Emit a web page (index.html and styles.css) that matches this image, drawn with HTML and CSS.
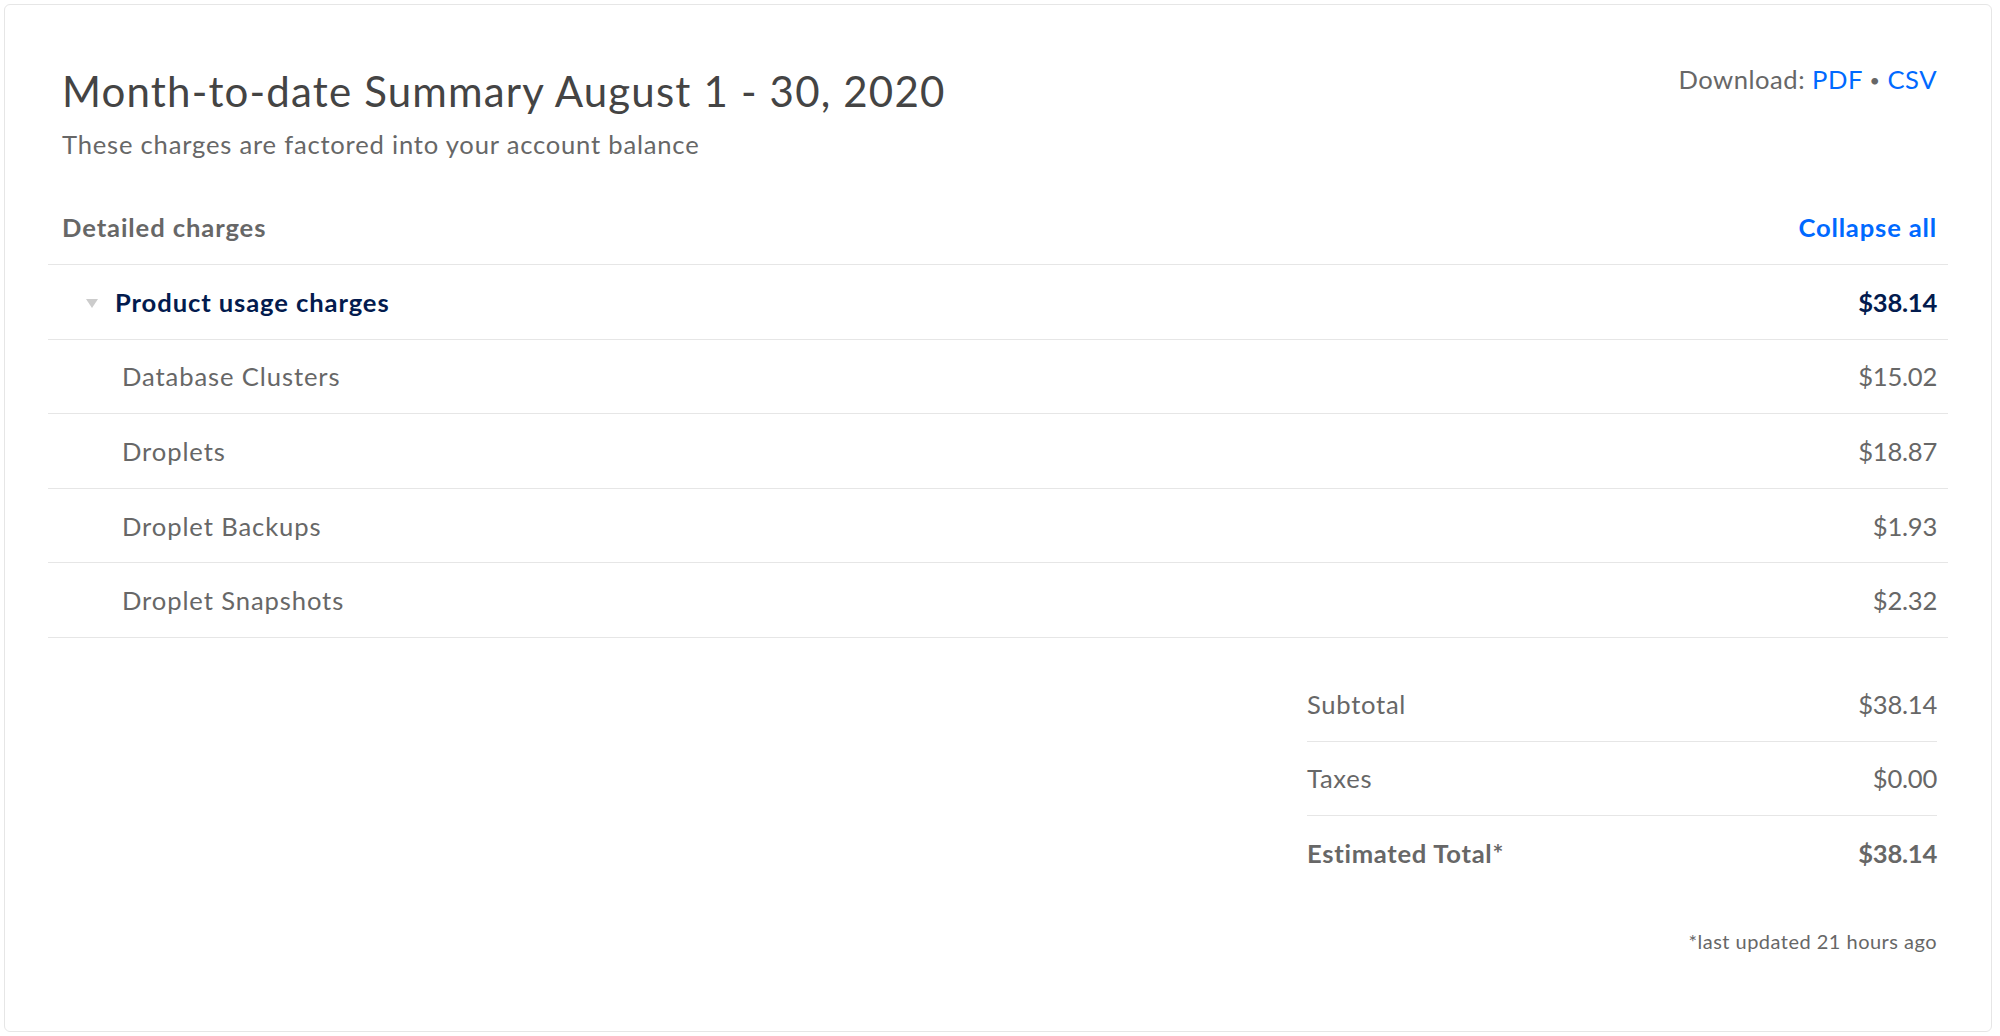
FILE: index.html
```html
<!DOCTYPE html>
<html lang="en">
<head>
<meta charset="utf-8">
<title>Month-to-date Summary</title>
<link rel="stylesheet" href="styles.css">
</head>
<body>
<section class="card">
  <header class="summary-head">
    <div class="titles">
      <h1 class="title">Month-to-date Summary August 1 - 30, 2020</h1>
      <p class="subtitle">These charges are factored into your account balance</p>
    </div>
    <div class="download">Download: <a href="#" class="link">PDF</a> <span class="dot">•</span> <a href="#" class="link">CSV</a></div>
  </header>

  <div class="charges">
    <div class="row row-head">
      <span class="head-label">Detailed charges</span>
      <a href="#" class="collapse">Collapse all</a>
    </div>
    <div class="row row-group">
      <span class="group-label"><span class="caret"></span>Product usage charges</span>
      <span class="group-amount amount">$38.14</span>
    </div>
    <div class="row row-item">
      <span class="item-label">Database Clusters</span>
      <span class="item-amount amount">$15.02</span>
    </div>
    <div class="row row-item">
      <span class="item-label">Droplets</span>
      <span class="item-amount amount">$18.87</span>
    </div>
    <div class="row row-item">
      <span class="item-label">Droplet Backups</span>
      <span class="item-amount amount">$1.93</span>
    </div>
    <div class="row row-item">
      <span class="item-label">Droplet Snapshots</span>
      <span class="item-amount amount">$2.32</span>
    </div>
  </div>

  <div class="totals">
    <div class="total-row">
      <span>Subtotal</span>
      <span class="amount">$38.14</span>
    </div>
    <div class="total-row">
      <span>Taxes</span>
      <span class="amount">$0.00</span>
    </div>
    <div class="total-row total-final">
      <span>Estimated Total*</span>
      <span class="amount">$38.14</span>
    </div>
  </div>

  <p class="footnote">*last updated 21 hours ago</p>
</section>
</body>
</html>
```

FILE: styles.css
```css
* { box-sizing: border-box; }

html, body {
  margin: 0;
  padding: 0;
  background: #ffffff;
}

body {
  padding: 4px 8px 0 4px;
  font-family: "Lato", "Liberation Sans", sans-serif;
  letter-spacing: 0.03em;
  color: #676767;
}

.card {
  height: 1028px;
  border: 1px solid #e6e6e6;
  border-radius: 6px;
  padding: 0 43px;
  background: #fff;
}

.summary-head {
  display: flex;
  justify-content: space-between;
  align-items: flex-start;
  padding: 61px 11px 0 14px;
}

.title {
  margin: 0;
  font-size: 42px;
  line-height: 50px;
  font-weight: 400;
  letter-spacing: 0.028em;
  color: #444444;
}

.subtitle {
  margin: 13px 0 0 0;
  font-size: 25.6px;
  line-height: 30px;
  letter-spacing: 0.031em;
  color: #676767;
}

.download {
  margin-top: -2px;
  font-size: 25.6px;
  line-height: 31px;
  letter-spacing: 0.02em;
  color: #676767;
}

.link {
  color: #0069ff;
  text-decoration: none;
}

.dot {
  font-size: 18px;
  vertical-align: 2px;
  color: #676767;
}

.charges {
  margin-top: 31.4px;
}

.row {
  display: flex;
  justify-content: space-between;
  align-items: center;
  height: 74.6px;
  padding: 0 11px 0 14px;
  border-bottom: 1px solid #e6e6e6;
  font-size: 25.6px;
  letter-spacing: 0.035em;
}

.head-label {
  font-weight: 700;
  letter-spacing: 0.035em;
  color: #676767;
}

.collapse {
  font-weight: 700;
  letter-spacing: 0.033em;
  color: #0069ff;
  text-decoration: none;
}

.group-label,
.group-amount {
  font-weight: 700;
  letter-spacing: 0.035em;
  color: #031b4e;
}

.group-label {
  display: flex;
  align-items: center;
  padding-left: 24px;
}

.caret {
  width: 0;
  height: 0;
  border-left: 6px solid transparent;
  border-right: 6px solid transparent;
  border-top: 9px solid #cccccc;
  margin-right: 17px;
  margin-top: 4px;
}

.item-label {
  padding-left: 60px;
  color: #676767;
}

.item-amount {
  color: #676767;
}

.amount,
.group-amount.amount {
  letter-spacing: -0.01em;
}

.totals {
  width: 630px;
  margin: 29px 11px 0 auto;
}

.total-row {
  display: flex;
  justify-content: space-between;
  align-items: center;
  height: 74.6px;
  border-bottom: 1px solid #e6e6e6;
  font-size: 25.6px;
  letter-spacing: 0.028em;
  color: #676767;
}

.total-final {
  border-bottom: none;
  font-weight: 700;
}

.footnote {
  margin: 38px 11px 0 0;
  text-align: right;
  font-size: 20px;
  line-height: 24px;
  color: #676767;
}
```
